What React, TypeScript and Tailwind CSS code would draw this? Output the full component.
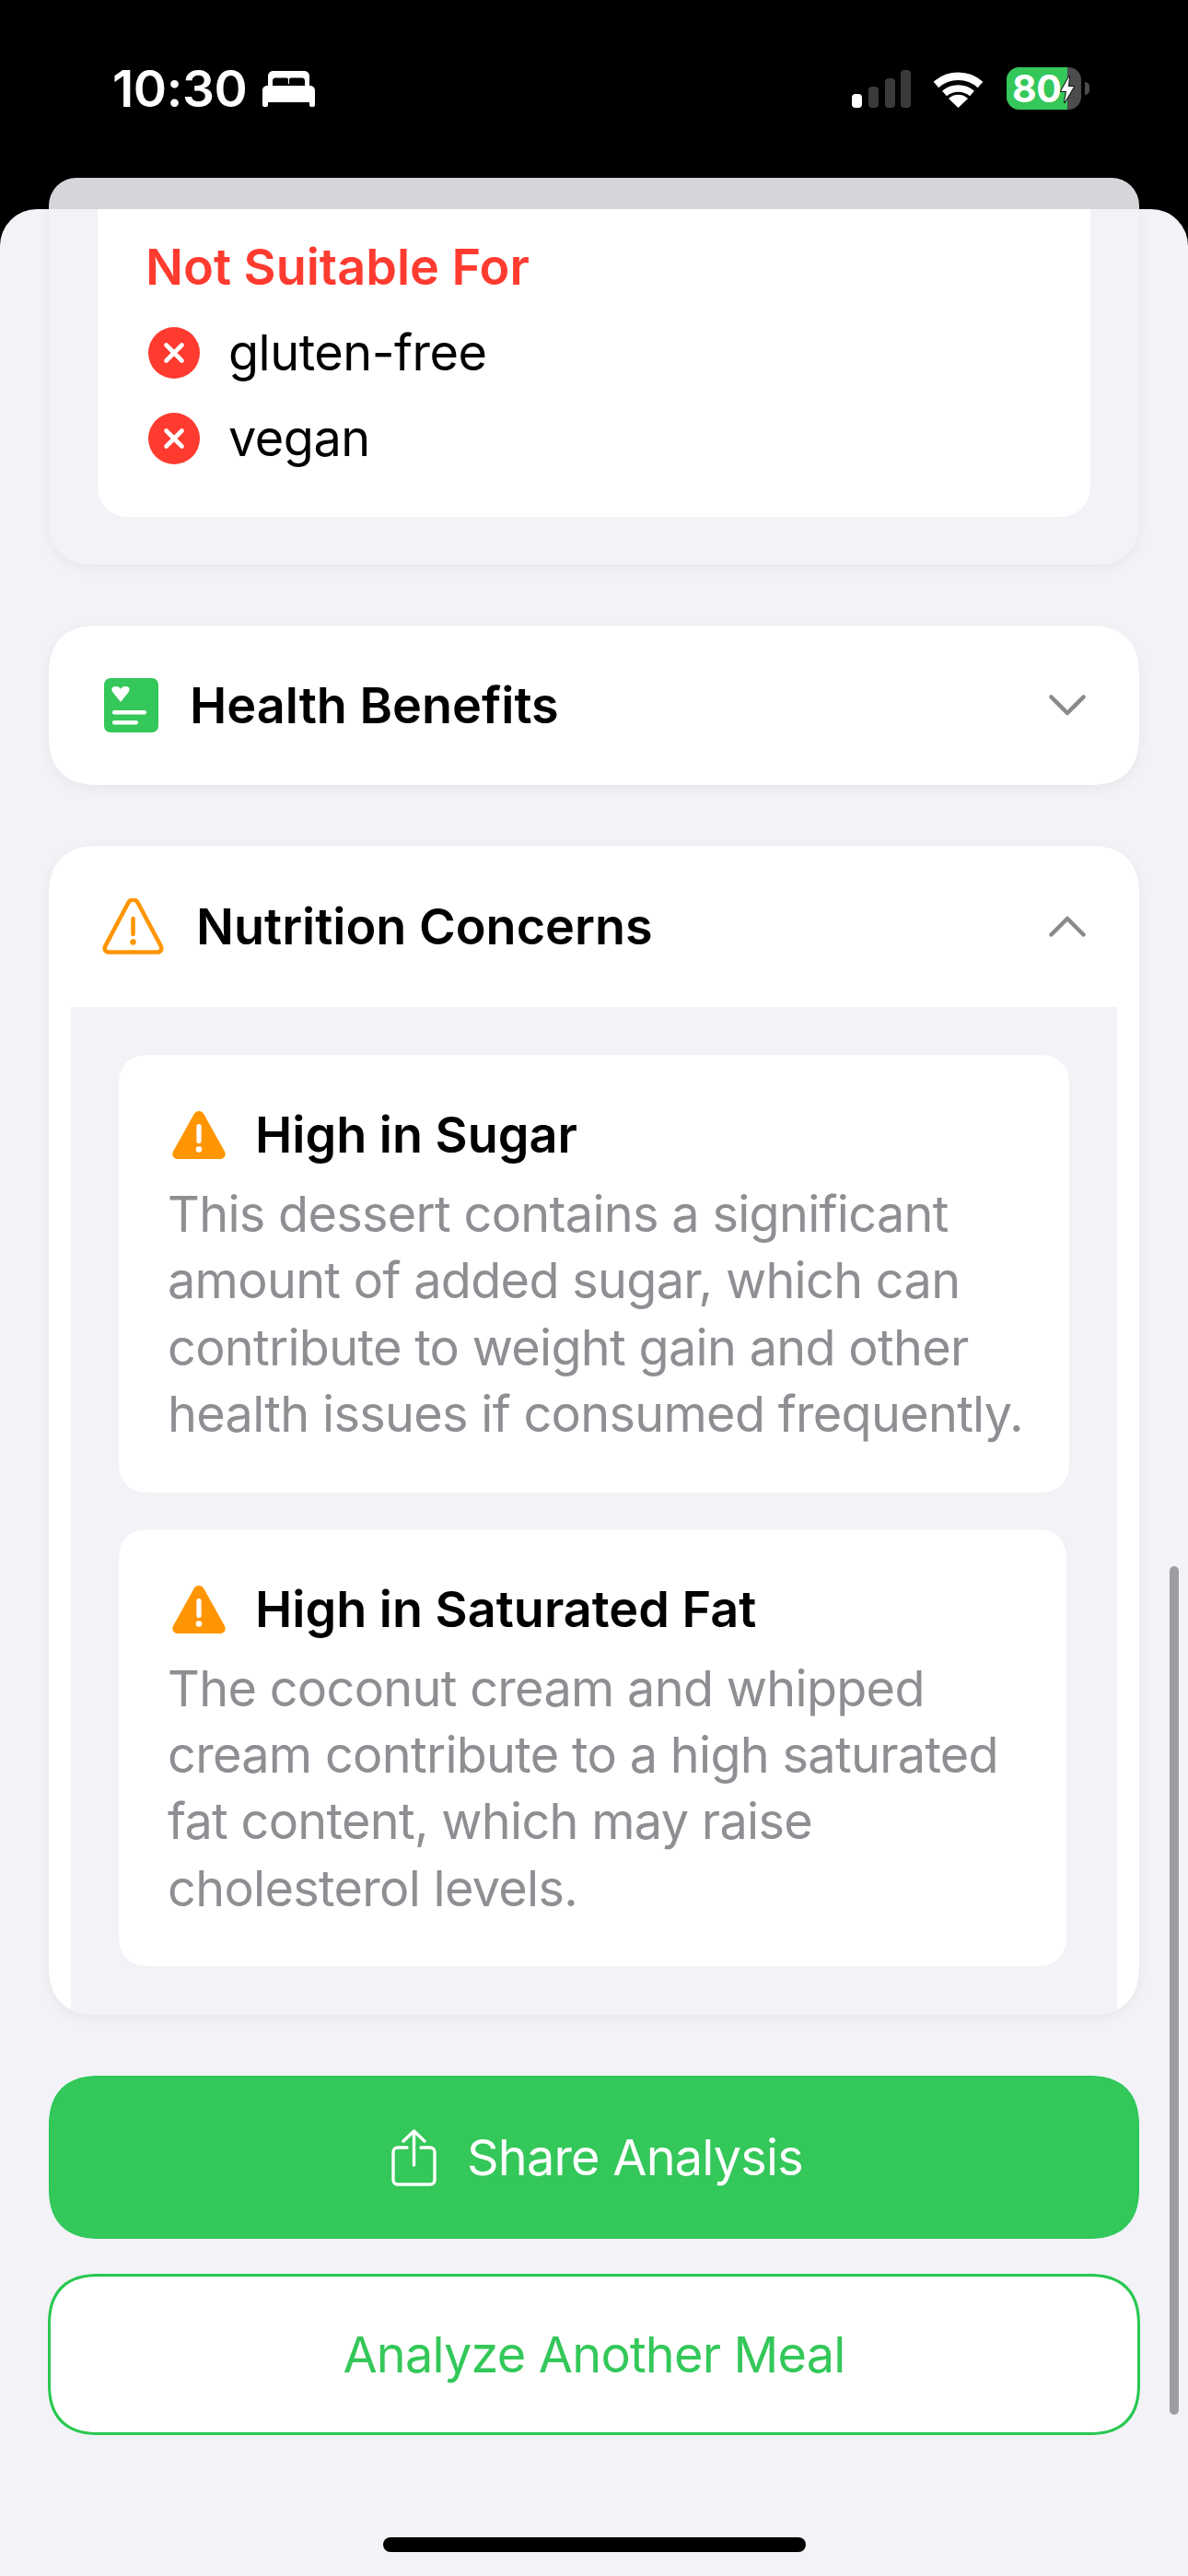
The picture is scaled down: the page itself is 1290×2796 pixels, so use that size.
const font = "font-['Inter','Liberation_Sans',sans-serif]";

function XCircle() {
  return (
    <svg width="56" height="56" viewBox="0 0 56 56" className="shrink-0">
      <circle cx="28" cy="28" r="28" fill="#ff3b30" />
      <path d="M19.5 19.5 36.5 36.5M36.5 19.5 19.5 36.5" stroke="#fff" strokeWidth="4.6" strokeLinecap="round" />
    </svg>
  );
}

function TriangleFilled() {
  return (
    <svg width="58" height="52" viewBox="0 0 58 52" className="shrink-0">
      <path d="M23.8 3 1.2 43.5C-1.2 48 1.600 52 6 52h46c4.400 0 7.200-4 4.800-8.500L34.200 3C31.800-1 26.200-1 23.800 3Z" fill="#ff9500" />
      <rect x="26.400" y="14" width="5.200" height="21" rx="2.600" fill="#fff" />
      <circle cx="29" cy="41.500" r="3.300" fill="#fff" />
    </svg>
  );
}

function Detail({ title, lines, width }: { title: string; lines: string[]; width: string }) {
  return (
    <div className={`${width} rounded-[34px] bg-white pt-[50px] pb-[48px] pl-[53px] [corner-shape:superellipse(1.3)]`}>
      <div className="flex h-[74px] items-center">
        <div className="ml-[5px] w-[90px]">
          <TriangleFilled />
        </div>
        <span className="text-[54px] leading-[74px] font-semibold text-black">{title}</span>
      </div>
      <p className="mt-[13px] text-[54px] leading-[72.4px] tracking-[-0.7px] whitespace-nowrap text-[#8e8e93]">
        {lines.map((l) => (
          <span key={l} className="block">{l}</span>
        ))}
      </p>
    </div>
  );
}

export default function App() {
  return (
    <div className={`${font} flex h-[2796px] w-[1290px] flex-col overflow-hidden bg-black`}>
      <div className="flex h-[193px] shrink-0 items-start justify-between pt-[73px] pr-[107px] pl-[122px] text-white">
        <div className="flex h-[46px] items-center">
          <span className="text-[55px] leading-[46px] font-semibold tracking-[-0.4px]">10:30</span>
          <svg width="57" height="39" viewBox="0 0 57 39" className="ml-[17px]">
            <path d="M6 16V6C6 2.500 8 0 12 0H45C49 0 51 2.500 51 6V16H46V11C46 9 45 7.500 43 7.500H31C29.500 7.500 29 8.500 29 10V14H28V10C28 8.500 27.500 7.500 26 7.500H14C12 7.500 11 9 11 11V16Z" fill="#fff" />
            <path d="M5 16H52C55 16 57 18.500 57 21V37C57 38 56 39 55 39H53C52 39 51 38 51 37V34H6V37C6 38 5 39 4 39H2C1 39 0 38 0 37V21C0 18.500 2 16 5 16Z" fill="#fff" />
          </svg>
        </div>
        <div className="flex h-[46px] items-center">
          <svg width="64" height="41" viewBox="0 0 64 41">
            <rect x="0" y="26" width="11" height="15" rx="4" fill="#fff" />
            <rect x="18" y="18" width="11" height="23" rx="4" fill="#3a3a3c" />
            <rect x="36" y="9" width="11" height="32" rx="4" fill="#3a3a3c" />
            <rect x="53" y="0" width="11" height="41" rx="4" fill="#3a3a3c" />
          </svg>
          <svg width="55" height="41" viewBox="0 0 55 41" fill="none" className="ml-[24px]">
            <path d="M3.500 16A36 36 0 0 1 51.500 16" stroke="#fff" strokeWidth="8.500" />
            <path d="M12.500 25.500A23 23 0 0 1 42.500 25.500" stroke="#fff" strokeWidth="7.500" />
            <path d="M27.500 41 17 31A15 15 0 0 1 38 31Z" fill="#fff" />
          </svg>
          <div className="relative ml-[25px] flex h-[46px] w-[81px] rounded-[14px] bg-[#4c4c4e]">
            <div className="flex h-full w-[66px] items-center rounded-l-[14px] bg-[#34c759] pl-[6px] text-[41px] leading-none font-bold tracking-[-0.5px]">80</div>
            <svg width="18" height="32" viewBox="0 0 18 32" className="absolute top-[8px] left-[57px]">
              <path d="M11 2 2 18H8L6 30 16 13H10Z" fill="#fff" stroke="#111" strokeWidth="2" paintOrder="stroke" strokeLinejoin="round" />
            </svg>
          </div>
          <div className="ml-[4px] h-[14px] w-[5px] rounded-r-full bg-[#4c4c4e]" />
        </div>
      </div>

      <div className="mx-[53px] h-[34px] shrink-0 rounded-t-[30px] bg-[#d5d5da]" />

      <div className="relative flex min-h-0 flex-1 flex-col overflow-hidden rounded-t-[40px] bg-[#f2f2f7] px-[53px]">
        <div className="-mt-[100px] shrink-0 rounded-[42px] bg-[#f2f2f7] px-[53px] pt-[53px] pb-[52px] shadow-[0_4px_14px_rgba(0,0,0,0.05)]">
          <div className="rounded-[32px] bg-white pt-[79px] pb-[39px] pl-[52px]">
            <h2 className="mb-[15px] text-[54px] leading-[62px] font-semibold text-[#ff3b30]">Not Suitable For</h2>
            {["gluten-free", "vegan"].map((t) => (
              <div key={t} className="ml-[3px] flex h-[93px] items-center gap-[31px]">
                <XCircle />
                <span className="text-[54px] font-normal tracking-[-0.5px] text-black">{t}</span>
              </div>
            ))}
          </div>
        </div>

        <div className="mt-[66px] flex h-[173px] shrink-0 items-center justify-between rounded-[54px] bg-white pr-[58px] pl-[60px] shadow-[0_4px_14px_rgba(0,0,0,0.05)] [corner-shape:superellipse(1.3)]">
          <div className="flex items-center gap-[34px]">
            <svg width="59" height="59" viewBox="0 0 59 59">
              <rect width="59" height="59" rx="7" fill="#34c759" />
              <path d="M18 26 10 16C6.500 11.500 9 9 13 9 15.500 9 17 10 18 12 19 10 20.500 9 23 9 27 9 29.500 11.500 26 16Z" fill="#fff" />
              <rect x="9" y="35" width="37" height="4.400" rx="2.200" fill="#fff" />
              <rect x="9" y="46" width="28" height="4.400" rx="2.200" fill="#fff" />
            </svg>
            <span className="text-[54px] font-semibold text-black">Health Benefits</span>
          </div>
          <svg width="40" height="23" viewBox="0 0 40 23" fill="none">
            <path d="M2.500 2.500 20 20 37.500 2.500" stroke="#8a8a8e" strokeWidth="4.500" strokeLinecap="round" strokeLinejoin="round" />
          </svg>
        </div>

        <div className="mt-[66px] h-[1269px] shrink-0 overflow-hidden rounded-[54px] bg-white shadow-[0_4px_14px_rgba(0,0,0,0.05)] [corner-shape:superellipse(1.3)]">
          <div className="flex h-[175px] items-center justify-between pr-[58px] pl-[58px]">
            <div className="flex items-center gap-[35px]">
              <svg width="67" height="61" viewBox="0 0 67 61" fill="none">
                <path d="M28.500 4.500 3.500 51.500C1.500 55.500 3.500 58.500 7.500 58.500h52c4 0 6-3 4-7L38.500 4.500C36 .5 31 .5 28.500 4.500Z" stroke="#ff9500" strokeWidth="4.500" strokeLinejoin="round" />
                <path d="M33.500 22v17" stroke="#ff9500" strokeWidth="4.500" strokeLinecap="round" />
                <circle cx="33.500" cy="47.500" r="3.200" fill="#ff9500" />
              </svg>
              <span className="text-[54px] font-semibold text-black">Nutrition Concerns</span>
            </div>
            <svg width="40" height="23" viewBox="0 0 40 23" fill="none">
              <path d="M2.500 20.500 20 3 37.500 20.500" stroke="#8a8a8e" strokeWidth="4.500" strokeLinecap="round" strokeLinejoin="round" />
            </svg>
          </div>
          <div className="mx-[24px] flex h-[1094px] flex-col items-start gap-[40px] bg-[#f2f2f7] pt-[52px] pl-[52px]">
            <Detail
              width="w-[1032px]"
              title="High in Sugar"
              lines={[
                "This dessert contains a significant",
                "amount of added sugar, which can",
                "contribute to weight gain and other",
                "health issues if consumed frequently.",
              ]}
            />
            <Detail
              width="w-[1029px]"
              title="High in Saturated Fat"
              lines={[
                "The coconut cream and whipped",
                "cream contribute to a high saturated",
                "fat content, which may raise",
                "cholesterol levels.",
              ]}
            />
          </div>
        </div>

        <button className="mt-[66px] flex h-[177px] shrink-0 items-center justify-center gap-[33px] rounded-[56px] border border-[#22c753] bg-[#34c759] pl-[7px] text-[54px] tracking-[-0.8px] text-white [corner-shape:superellipse(1.3)]">
          <svg width="49" height="62" viewBox="0 0 49 62" fill="none" stroke="#fff" strokeWidth="3.400" strokeLinecap="round" strokeLinejoin="round">
            <path d="M17 20H7C4 20 2 22 2 25V55C2 58 4 60 7 60H42C45 60 47 58 47 55V25C47 22 45 20 42 20H32" />
            <path d="M24.500 39V2M13 13 24.500 2 36 13" />
          </svg>
          Share Analysis
        </button>
        <button className="mt-[38px] -mx-px flex h-[175px] shrink-0 items-center justify-center rounded-[56px] border-[3px] border-[#28c850] bg-white text-[54px] tracking-[-0.8px] text-[#34c759] [corner-shape:superellipse(1.3)]">
          Analyze Another Meal
        </button>

        <div className="absolute top-[1473px] right-[10px] h-[921px] w-[10px] rounded-full bg-[#9e9ea2]" />
        <div className="absolute top-[2527px] left-[416px] h-[16px] w-[459px] rounded-full bg-black" />
      </div>
    </div>
  );
}
